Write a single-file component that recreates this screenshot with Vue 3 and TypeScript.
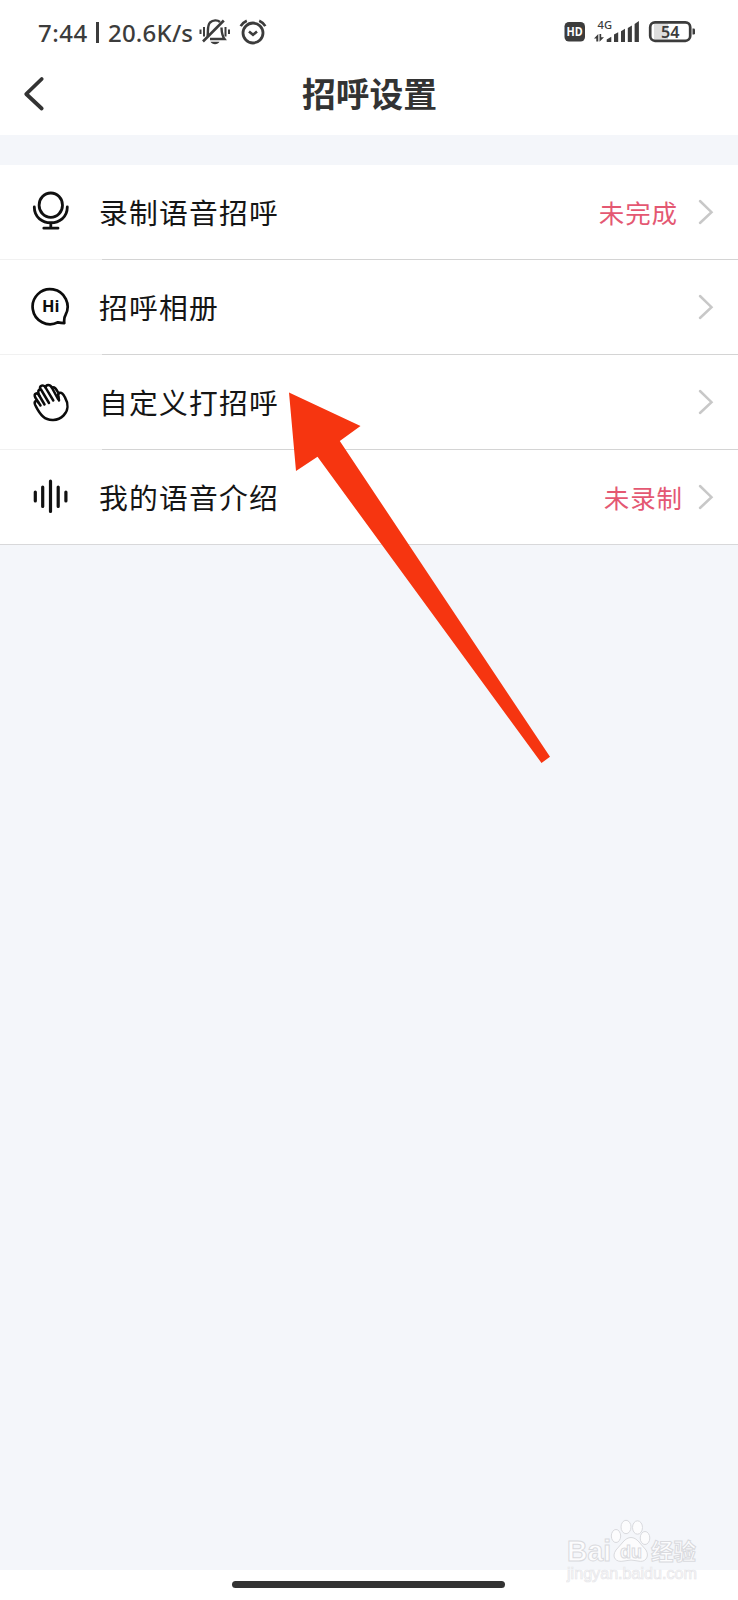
<script setup lang="ts">
type IconName = 'mic' | 'hi' | 'hand' | 'wave'

interface SettingRow {
  icon: IconName
  label: string
  status?: string
  flush?: boolean
}

const rows: SettingRow[] = [
  { icon: 'mic', label: '录制语音招呼', status: '未完成' },
  { icon: 'hi', label: '招呼相册' },
  { icon: 'hand', label: '自定义打招呼' },
  { icon: 'wave', label: '我的语音介绍', status: '未录制', flush: true },
]
</script>

<template>
  <div class="screen">
    <div class="statusbar">
      <div class="status-left">
        <span class="clock">7:44</span>
        <span class="pipe"></span>
        <span class="speed">20.6K/s</span>
        <svg class="bell" width="32" height="28" viewBox="0 0 32 28" fill="none" stroke="#3c3c3c" stroke-width="2.400">
          <path d="M1.500 11.500v4.500M5 9v9.500M26.500 9v9.500M30 11.500v4.500" stroke-width="2" />
          <path d="M8.500 18C9.500 14 7.800 8 11 4.500C14 1.800 18.500 1.800 21 4" />
          <path d="M22.500 9.500C22.800 14 22.500 17 25.500 21H11" />
          <path d="M4 23.500L24.800 2.500" stroke-width="2.600" />
          <path d="M11.500 23.800h9c-1.500 3.200-7.500 3.200-9 0z" fill="#3c3c3c" stroke="none" />
        </svg>
        <svg class="alarm" width="28" height="28" viewBox="0 0 28 28" fill="none" stroke="#3c3c3c" stroke-width="2.600">
          <circle cx="14" cy="15" r="10" stroke-width="2.800" />
          <path d="M1.700 8.200Q3.800 4.400 7.800 2.700M20.200 2.700Q24.200 4.400 26.300 8.200" />
          <path d="M10 13.500L14 16.800L18 13.500" stroke-width="2.600" />
        </svg>
      </div>
      <svg class="status-right" width="136" height="29" viewBox="0 -1 136 29" fill="#3c3c3c">
        <rect x="0.500" y="3" width="20.500" height="19.500" rx="4.500" />
        <text x="2.600" y="17" class="hd" textLength="16.200" lengthAdjust="spacingAndGlyphs">HD</text>
        <text x="33.500" y="9.500" class="net" textLength="14.500" lengthAdjust="spacingAndGlyphs">4G</text>
        <path d="M30 19.500L34.300 15V22.500H32.300V19.500zM35.500 15H37.200V18.300H40L35.500 22.800z" />
        <path d="M42.700 23V20.500L47.300 17.700V23zM50 23V15.500L54.200 13.200V23zM57 23V12.200L61 9.800V23zM63.800 23V9L67.900 6.500V23zM70.600 23V5L74.900 2V23z" />
        <rect x="90" y="5" width="14" height="15" fill="#dedede" />
        <rect x="86.200" y="3.400" width="40" height="18.400" rx="4.800" fill="none" stroke="#3c3c3c" stroke-width="2.700" />
        <path d="M128.500 9.500h1.300q1.200 0 1.200 1.200v3.600q0 1.200-1.200 1.200h-1.300z" />
        <text x="97" y="18.500" class="level" textLength="18.500" lengthAdjust="spacingAndGlyphs">54</text>
      </svg>
    </div>

    <header class="header">
      <svg class="back" width="22" height="36" viewBox="0 0 22 36" fill="none" stroke="#333" stroke-width="3.800" stroke-linecap="round" stroke-linejoin="round">
        <path d="M18.700 3L3.200 18L18.700 32.500" />
      </svg>
      <h1>招呼设置</h1>
    </header>

    <main class="list">
      <div v-for="row in rows" :key="row.label" class="row">
        <span class="icon">
          <svg v-if="row.icon === 'mic'" width="40" height="40" viewBox="0 0 40 40" fill="none" stroke="#111" stroke-width="2.800" stroke-linecap="round">
            <ellipse cx="19.800" cy="14.200" rx="11.700" ry="12.200" />
            <path d="M3.300 16C3.300 37 36.300 37 36.300 16M19.800 32V36.500M12.800 37.200H27" />
          </svg>
          <svg v-else-if="row.icon === 'hi'" width="40" height="40" viewBox="0 0 40 40" fill="none" stroke="#0c0c0c" stroke-width="2.700" stroke-linejoin="round" stroke-linecap="round">
            <path d="M27 36.300A17.500 17.500 0 1 1 34.500 29Q32.700 32 33.300 37.200Q30 36.800 27 36.300Z" />
            <text x="11" y="25.500" class="hi" textLength="17.500" lengthAdjust="spacingAndGlyphs">Hi</text>
          </svg>
          <svg v-else-if="row.icon === 'hand'" width="40" height="42" viewBox="0 0 40 42" fill="none" stroke="#0c0c0c" stroke-width="2.500" stroke-linejoin="round" stroke-linecap="round">
            <path d="M9.500 24.500L7.500 21.500C5 18.500 2.700 20.500 4.200 24C6.500 28.500 8 32 12 35.500C17.500 40.500 27 40 32.500 34.500C37.500 29.500 37.500 22.500 34 16.500C32.500 13.500 31 11.300 28.800 11.800C27 12.300 27 14 27.500 15.500L28 19.500" />
            <path d="M13.500 23.500L8.500 15C6 10.500 2.500 12.500 4.300 16.500L7.500 21.500" />
            <path d="M18 22L10 8.500C7 8.500 6.300 10.500 8.500 15" />
            <path d="M9.300 8.500C8 4.500 12.500 3 14.500 6.500L22.300 19.500" />
            <path d="M14.500 6.500C15 3 19 3 20.800 6.500L27 18" />
            <path d="M20.800 6.500C23.500 5.500 25 7.500 27.700 12.500" />
          </svg>
          <svg v-else width="40" height="40" viewBox="0 0 40 40" fill="none" stroke="#111" stroke-width="3.200" stroke-linecap="round">
            <path d="M4.300 16V25M11.700 11V30.500M19.500 5.200V35.500M27.200 11V30.500M34.900 16V25" />
          </svg>
        </span>
        <span class="label">{{ row.label }}</span>
        <span v-if="row.status" class="state" :class="{ flush: row.flush }">{{ row.status }}</span>
        <svg class="chevron" width="16" height="28" viewBox="0 0 16 28" fill="none" stroke="#c8c8c8" stroke-width="2.500" stroke-linecap="round">
          <path d="M2 3L13.500 14.200L2 25" />
        </svg>
      </div>
    </main>

    <div class="home"><span class="home-bar"></span></div>

    <svg class="pointer" width="264" height="372" viewBox="0 0 264 372">
      <path fill="#f63510" d="M1 .5L72.500 34L51.800 49L262 364.800L253.500 371L29.500 64.800L8 79Z" />
    </svg>

    <svg class="watermark" width="140" height="76" viewBox="0 0 140 76">
      <g class="mark">
        <text x="1" y="47" class="baidu" textLength="44" lengthAdjust="spacingAndGlyphs">Bai</text>
        <ellipse cx="50" cy="22" rx="4.700" ry="6.500" />
        <ellipse cx="60" cy="13" rx="5" ry="6.700" />
        <ellipse cx="71.500" cy="13.500" rx="5" ry="6.700" />
        <ellipse cx="79" cy="24" rx="4.800" ry="6.500" />
        <path d="M57 28C62 22 68 22 73 28L80 36C84 43 79 49 72 47Q65 45 58 47C50 49 45 43 50 36Z" />
        <text x="54" y="44" class="du" textLength="22" lengthAdjust="spacingAndGlyphs">du</text>
        <text x="85" y="46" class="jy" textLength="45" lengthAdjust="spacingAndGlyphs">经验</text>
        <text x="1" y="65" class="url" textLength="130" lengthAdjust="spacingAndGlyphs">jingyan.baidu.com</text>
      </g>
    </svg>
  </div>
</template>

<style>
body {
  margin: 0;
}
</style>

<style scoped>
.screen {
  position: relative;
  display: flex;
  flex-direction: column;
  width: 738px;
  height: 1600px;
  overflow: hidden;
  background: #f4f6fa;
  font-family: "Liberation Sans", "Noto Sans CJK SC", sans-serif;
}

.statusbar {
  box-sizing: border-box;
  display: flex;
  flex: none;
  justify-content: space-between;
  height: 60px;
  padding: 18px 38px 0 38px;
  background: #fff;
  color: #3c3c3c;
}

.status-left {
  display: flex;
  align-items: center;
  height: 28px;
  font: 500 24px/28px "Noto Sans", sans-serif;
}

.clock {
  width: 58px;
  padding-top: 1px;
  letter-spacing: 0.500px;
}

.pipe {
  width: 3px;
  height: 21px;
  margin-right: 9px;
  background: #3c3c3c;
}

.speed {
  width: 91px;
  padding-top: 1px;
  letter-spacing: 0.200px;
}

.bell {
  margin-right: 8px;
}

.hd {
  font: 700 12px "Open Sans", sans-serif;
  fill: #fff;
}

.net {
  font: 500 10.500px "Noto Sans", sans-serif;
}

.level {
  font: 600 15.500px "Noto Sans", sans-serif;
}

.header {
  display: grid;
  grid-template-columns: 70px 1fr 70px;
  flex: none;
  align-items: center;
  height: 75px;
  margin-bottom: 30px;
  background: #fff;
}

.back {
  margin: -8px 0 0 23px;
}

h1 {
  margin: -9px 0 0 1px;
  color: #333;
  font: 700 33.800px/48px "Noto Sans CJK SC", sans-serif;
  text-align: center;
}

.list {
  flex: none;
}

.row {
  box-sizing: border-box;
  display: flex;
  align-items: center;
  height: 95px;
  padding: 0 24px 0 31px;
  border-bottom: 1px solid #d8d8da;
  background: #fff;
}

.row:not(:last-child) {
  border-image: linear-gradient(to right, #f1f1f1 103px, #d4d4d4 103px) 1;
  border-image-width: 0 0 1px;
}

.icon {
  width: 68px;
  height: 40px;
  margin-top: -3px;
}

.hi {
  fill: #0c0c0c;
  stroke: none;
  font: 700 16.500px "Open Sans", sans-serif;
}

.label {
  flex: 1;
  margin-top: -1px;
  color: #151515;
  font: 400 28.800px/40px "Noto Sans CJK SC", sans-serif;
  letter-spacing: 1.200px;
}

.state {
  margin-right: 20px;
  color: #e45872;
  font: 400 25.500px/40px "Noto Sans CJK SC", sans-serif;
  letter-spacing: 0.900px;
}

.state.flush {
  margin-right: 15px;
}

.home {
  display: flex;
  flex: none;
  justify-content: center;
  height: 30px;
  margin-top: auto;
  background: #fff;
}

.home-bar {
  width: 273px;
  height: 7px;
  margin: 11px 1px 0 0;
  border-radius: 4px;
  background: #333;
}

.pointer {
  position: absolute;
  left: 288px;
  top: 392px;
}

.watermark {
  position: absolute;
  left: 566px;
  top: 1514px;
}

.mark {
  fill: #fcfcfd;
  stroke: #d9dade;
  stroke-width: 1;
}

.baidu {
  font: 700 29px "Liberation Sans", sans-serif;
}

.du {
  font: 700 19px "Liberation Sans", sans-serif;
}

.jy {
  font: 700 23px "Noto Sans CJK SC", sans-serif;
}

.url {
  stroke: #e6e6e9;
  stroke-width: 0.700;
  font: 400 16px "Liberation Sans", sans-serif;
}
</style>
